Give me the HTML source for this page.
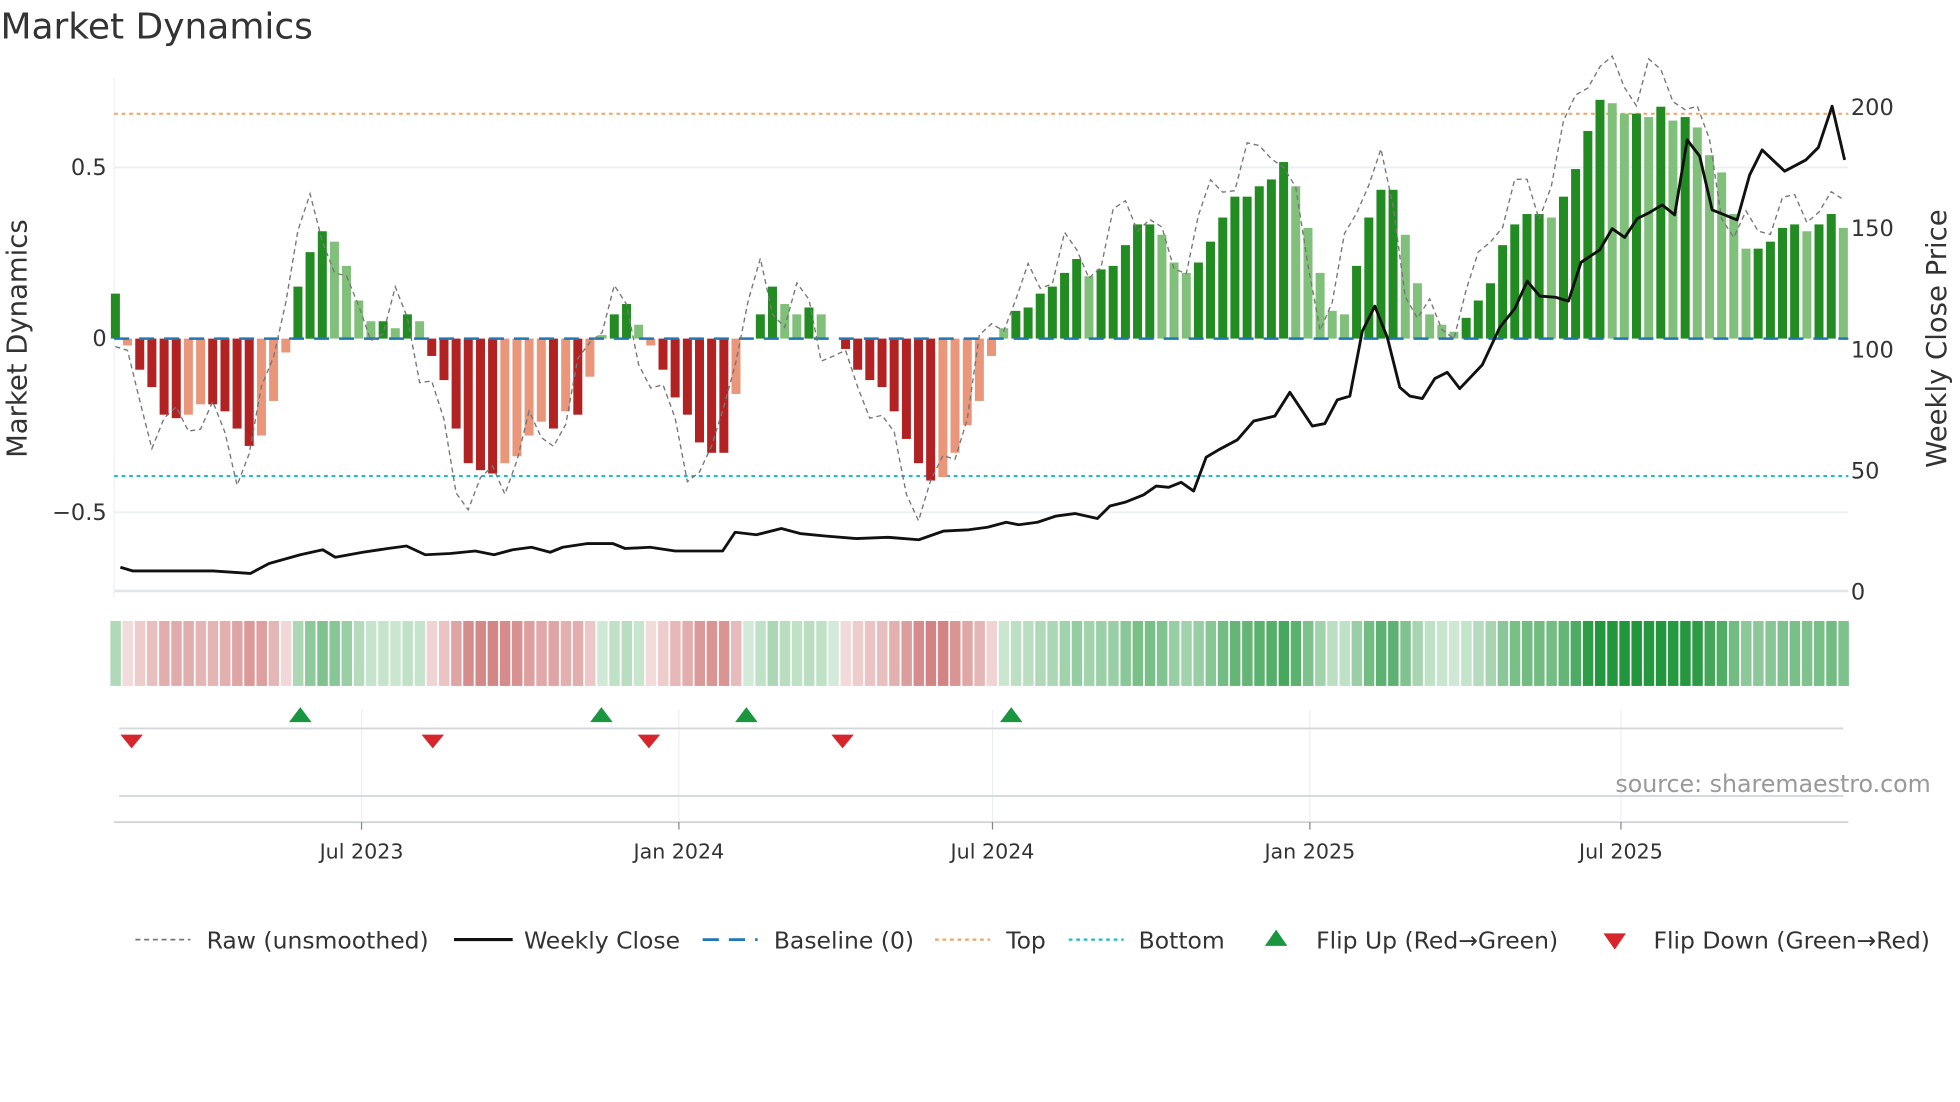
<!DOCTYPE html>
<html><head><meta charset="utf-8">
<style>
html,body{margin:0;padding:0;background:#fff;}
svg{display:block;}
text{font-family:"DejaVu Sans","Liberation Sans",sans-serif;}
</style></head>
<body>
<svg id="s" width="1960" height="1102" viewBox="0 0 1568 882" xmlns="http://www.w3.org/2000/svg">
<rect width="1568" height="882" fill="#fff"/>
<text x="0" y="31" font-size="28.8" fill="#333">Market Dynamics</text>
<line x1="91" x2="1479" y1="134" y2="134" stroke="#eceff1" stroke-width="1.5"/>
<line x1="91" x2="1479" y1="410" y2="410" stroke="#eceff1" stroke-width="1.5"/>
<line x1="91" x2="1479" y1="473" y2="473" stroke="#e3e6e9" stroke-width="2"/>
<line x1="91" x2="91" y1="62" y2="478" stroke="#eef0f2" stroke-width="1"/>
<line x1="91" x2="1479" y1="91" y2="91" stroke="#f4a460" stroke-width="1.6" stroke-dasharray="3,3"/>
<line x1="91" x2="1479" y1="381" y2="381" stroke="#17becf" stroke-width="1.6" stroke-dasharray="3,3"/>
<g id="bars"></g>
<line x1="91" x2="1479" y1="271" y2="271" stroke="#1f77b4" stroke-width="2" stroke-dasharray="12,8"/>
<polyline id="raw" fill="none" stroke="#777" stroke-width="1.1" stroke-dasharray="4,3"/>
<polyline id="close" fill="none" stroke="#111" stroke-width="2.3" stroke-linejoin="round"/>
<g font-size="18" fill="#333">
<text x="85" y="140" text-anchor="end">0.5</text>
<text x="85" y="277" text-anchor="end">0</text>
<text x="85" y="416" text-anchor="end">−0.5</text>
<text x="1481" y="92">200</text>
<text x="1481" y="189">150</text>
<text x="1481" y="286">100</text>
<text x="1481" y="383">50</text>
<text x="1481" y="480">0</text>
</g>
<text transform="translate(21,271) rotate(-90)" font-size="22" fill="#333" text-anchor="middle">Market Dynamics</text>
<text transform="translate(1557,271) rotate(-90)" font-size="22" fill="#333" text-anchor="middle">Weekly Close Price</text>
<g id="heat"></g>
<g stroke="#eceff1" stroke-width="1">
<line x1="289" x2="289" y1="568" y2="658"/><line x1="543" x2="543" y1="568" y2="658"/>
<line x1="794" x2="794" y1="568" y2="658"/><line x1="1048" x2="1048" y1="568" y2="658"/>
<line x1="1297" x2="1297" y1="568" y2="658"/>
</g>
<line x1="95" x2="1475" y1="583" y2="583" stroke="#d5d8db" stroke-width="1.5"/>
<line x1="95" x2="1475" y1="637" y2="637" stroke="#d5d8db" stroke-width="1.5"/>
<line x1="91" x2="1479" y1="658" y2="658" stroke="#d0d3d6" stroke-width="1.5"/>
<g id="flips"></g>
<text x="1545" y="634" font-size="19" fill="#999" text-anchor="end">source: sharemaestro.com</text>
<g stroke="#888" stroke-width="1">
<line x1="289" x2="289" y1="658" y2="664"/><line x1="543" x2="543" y1="658" y2="664"/>
<line x1="794" x2="794" y1="658" y2="664"/><line x1="1048" x2="1048" y1="658" y2="664"/>
<line x1="1297" x2="1297" y1="658" y2="664"/>
</g>
<g font-size="16.5" fill="#333" text-anchor="middle">
<text x="289" y="687">Jul 2023</text><text x="543" y="687">Jan 2024</text>
<text x="794" y="687">Jul 2024</text><text x="1048" y="687">Jan 2025</text>
<text x="1297" y="687">Jul 2025</text>
</g>
<g font-size="18.8" fill="#333">
<line x1="108" x2="152" y1="752" y2="752" stroke="#777" stroke-width="1.4" stroke-dasharray="4,3"/>
<text x="165" y="759">Raw (unsmoothed)</text>
<line x1="363" x2="410" y1="752" y2="752" stroke="#111" stroke-width="2.5"/>
<text x="419" y="759">Weekly Close</text>
<line x1="562" x2="606" y1="752" y2="752" stroke="#1f77b4" stroke-width="2.2" stroke-dasharray="13,8"/>
<text x="619" y="759">Baseline (0)</text>
<line x1="748" x2="792" y1="752" y2="752" stroke="#f4a460" stroke-width="1.8" stroke-dasharray="3,3"/>
<text x="805" y="759">Top</text>
<line x1="855" x2="899" y1="752" y2="752" stroke="#17becf" stroke-width="1.8" stroke-dasharray="3,3"/>
<text x="911" y="759">Bottom</text>
<polygon points="1012,757 1030,757 1021,744" fill="#1a9641"/>
<text x="1053" y="759">Flip Up (Red→Green)</text>
<polygon points="1283,747 1301,747 1292,760" fill="#d7262b"/>
<text x="1323" y="759">Flip Down (Green→Red)</text>
</g>
</svg>
<script>
var V=[0.13,-0.02,-0.09,-0.14,-0.22,-0.23,-0.22,-0.19,-0.19,-0.21,-0.26,-0.31,-0.28,-0.18,-0.04,0.15,0.25,0.31,0.28,0.21,0.11,0.05,0.05,0.03,0.07,0.05,-0.05,-0.12,-0.26,-0.36,-0.38,-0.39,-0.36,-0.34,-0.28,-0.24,-0.26,-0.21,-0.22,-0.11,0.01,0.07,0.10,0.04,-0.02,-0.09,-0.17,-0.22,-0.30,-0.33,-0.33,-0.16,0.0,0.07,0.15,0.10,0.07,0.09,0.07,0.0,-0.03,-0.09,-0.12,-0.14,-0.21,-0.29,-0.36,-0.41,-0.40,-0.33,-0.25,-0.18,-0.05,0.03,0.08,0.09,0.13,0.15,0.19,0.23,0.18,0.20,0.21,0.27,0.33,0.33,0.30,0.22,0.19,0.22,0.28,0.35,0.41,0.41,0.44,0.46,0.51,0.44,0.32,0.19,0.08,0.07,0.21,0.35,0.43,0.43,0.30,0.16,0.07,0.04,0.02,0.06,0.11,0.16,0.27,0.33,0.36,0.36,0.35,0.41,0.49,0.60,0.69,0.68,0.65,0.65,0.64,0.67,0.63,0.64,0.61,0.53,0.48,0.36,0.26,0.26,0.28,0.32,0.33,0.31,0.33,0.36,0.32];
var NS="http://www.w3.org/2000/svg";
function el(t,a,p){var e=document.createElementNS(NS,t);for(var k in a)e.setAttribute(k,a[k]);p.appendChild(e);return e;}
var bars=document.getElementById('bars'),heat=document.getElementById('heat');
var step=(1475-92)/(V.length-1),Y0=271,K=277;
var raw=[];
for(var i=0;i<V.length;i++){
  var v=V[i],x=92+step*i,p=i?Math.abs(V[i-1]):0,dark=Math.abs(v)>=p;
  var col=v>=0?(dark?'#228b22':'#80c07a'):(dark?'#b22222':'#e9967a');
  var h=Math.abs(v)*K;
  if(h>0.5) el('rect',{x:(x-3.6).toFixed(1),y:(v>=0?Y0-h:Y0).toFixed(1),width:7.2,height:h.toFixed(1),fill:col},bars);
  var hc=v>=0?'rgba(34,150,60,'+(0.2+0.8*Math.min(1,v/0.65)).toFixed(2)+')':'rgba(200,100,100,'+(0.2+0.6*Math.min(1,-v/0.4)).toFixed(2)+')';
  el('rect',{x:(x-4).toFixed(1),y:497,width:(step-1.3).toFixed(1),height:52,fill:hc},heat);
  var n=i+1<V.length?V[i+1]:v;
  var r=(n*1.15+0.07*Math.sin(i*1.7));
  raw.push(x.toFixed(1)+','+(Y0-r*K).toFixed(1));
}
document.getElementById('raw').setAttribute('points',raw.join(' '));
document.getElementById('close').setAttribute('points',"96,454 106,457 140,457 170,457 200,459 215,451 240,444 258,440 268,446 290,442 310,439 325,437 340,444 360,443 380,441 395,444 410,440 425,438 440,442 450,438 470,435 490,435 500,439 520,438 540,441 578,441 588,426 605,428 625,423 640,427 660,429 685,431 710,430 735,432 755,425 775,424 790,422 805,418 815,420 830,418 845,413 860,411 878,415 888,405 900,402 915,396 925,389 935,390 945,386 955,393 965,366 975,360 990,352 1003,337 1020,333 1032,314 1050,341 1060,339 1070,320 1080,317 1090,265 1100,245 1110,270 1120,310 1128,317 1138,319 1148,303 1158,298 1168,311 1186,292 1200,262 1212,247 1222,225 1232,237 1245,238 1255,241 1265,210 1280,200 1290,183 1300,190 1310,175 1320,170 1330,164 1340,172 1350,112 1360,125 1370,168 1380,172 1390,176 1400,140 1410,120 1428,137 1445,128 1455,118 1466,85 1476,128");
var f=document.getElementById('flips');
[240,481,597,809].forEach(function(x){el('polygon',{points:(x-9)+',578 '+(x+9)+',578 '+x+',566',fill:'#1a9641'},f);});
[105,346,519,674].forEach(function(x){el('polygon',{points:(x-9)+',588 '+(x+9)+',588 '+x+',599',fill:'#d7262b'},f);});
</script>
</body></html>
